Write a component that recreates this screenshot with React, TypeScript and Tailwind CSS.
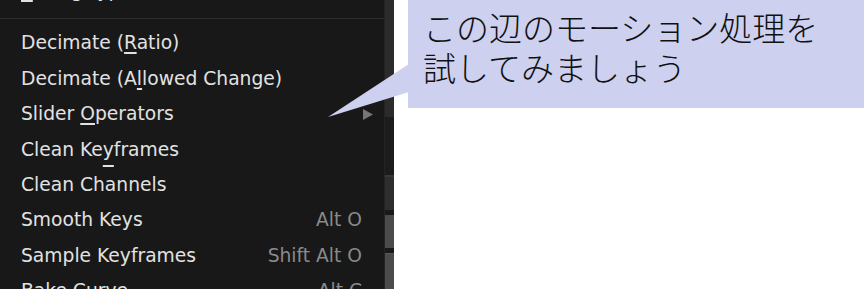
import React from 'react';

type Item = {
    text: string;
    u?: number;
    deep?: boolean;
    shortcut?: string;
    submenu?: boolean;
};

const topItem: Item = { text: 'Easing Type', u: 0 };

const items: Item[] = [
    { text: 'Decimate (Ratio)', u: 10 },
    { text: 'Decimate (Allowed Change)', u: 11 },
    { text: 'Slider Operators', u: 7, submenu: true },
    { text: 'Clean Keyframes', u: 8, deep: true },
    { text: 'Clean Channels' },
    { text: 'Smooth Keys', shortcut: 'Alt O' },
    { text: 'Sample Keyframes', shortcut: 'Shift Alt O' },
    { text: 'Bake Curve', shortcut: 'Alt C' },
];

const Label: React.FC<{ item: Item }> = ({ item }) => {
    if (item.u === undefined) return <span>{item.text}</span>;
    const { text, u } = item;
    return (
        <span>
            {text.slice(0, u)}
            <span
                className={`underline decoration-2 [text-decoration-skip-ink:none] ${item.deep ? 'underline-offset-[9px]' : 'underline-offset-[3px]'}`}
            >
                {text[u]}
            </span>
            {text.slice(u + 1)}
        </span>
    );
};

const MenuRow: React.FC<{ item: Item }> = ({ item }) => (
    <div className="flex items-center h-[35.35px] pl-[21px] pr-[22px] shrink-0">
        <span className="text-[#e2e2e2]">
            <Label item={item} />
        </span>
        <span className="flex-1" />
        {item.shortcut && <span className="text-[#8a8a8a]">{item.shortcut}</span>}
        {item.submenu && (
            <svg width="10" height="11" viewBox="0 0 10 11" className="-mr-[11px]" aria-hidden="true">
                <polygon points="0,0 10,5.5 0,11" fill="#767676" />
            </svg>
        )}
    </div>
);

export default function App() {
    return (
        <div className="relative flex w-[864px] h-[289px] overflow-hidden bg-white">
            {/* Menu */}
            <div
                className="w-[384px] h-full bg-[#181818] text-[18.7px] overflow-hidden"
                style={{ fontFamily: '"DejaVu Sans", sans-serif' }}
            >
                <div className="flex flex-col -mt-[26.3px]">
                    <MenuRow item={topItem} />
                    <div className="h-[16.8px] pt-[8.6px] shrink-0">
                        <div className="h-[1.5px] bg-[#2f2f2f]" />
                    </div>
                    {items.map((item) => (
                        <MenuRow key={item.text} item={item} />
                    ))}
                </div>
            </div>

            {/* Editor strip behind the menu */}
            <div className="w-[10px] h-full flex flex-col border-l border-[#232323]">
                <div className="h-[117px] bg-[#2b2b2b]" />
                <div className="h-[58px] bg-[#1c1c1c]" />
                <div className="h-[2px] bg-[#383838]" />
                <div className="h-[33px] bg-[#2e2e2e]" />
                <div className="h-[5px] bg-[#191919]" />
                <div className="h-[33px] bg-[#4b4b4b]" />
                <div className="h-[5px] bg-[#191919]" />
                <div className="flex-1 bg-[#4b4b4b] border-t border-[#575757]" />
            </div>

            {/* Callout */}
            <svg className="absolute left-0 top-0 pointer-events-none" width="864" height="289" aria-hidden="true">
                <polygon points="328,117 409,64 409,92" fill="#cdd0ee" />
            </svg>
            <div
                className="absolute left-[408px] top-0 w-[456px] h-[108px] bg-[#cdd0ee] pl-[15px] pt-[7px] text-[33px] leading-[40px] font-light text-[#111111]"
                style={{ fontFamily: '"Noto Sans CJK JP", sans-serif' }}
            >
                <div>この辺のモーション処理を</div>
                <div>試してみましょう</div>
            </div>
        </div>
    );
}
